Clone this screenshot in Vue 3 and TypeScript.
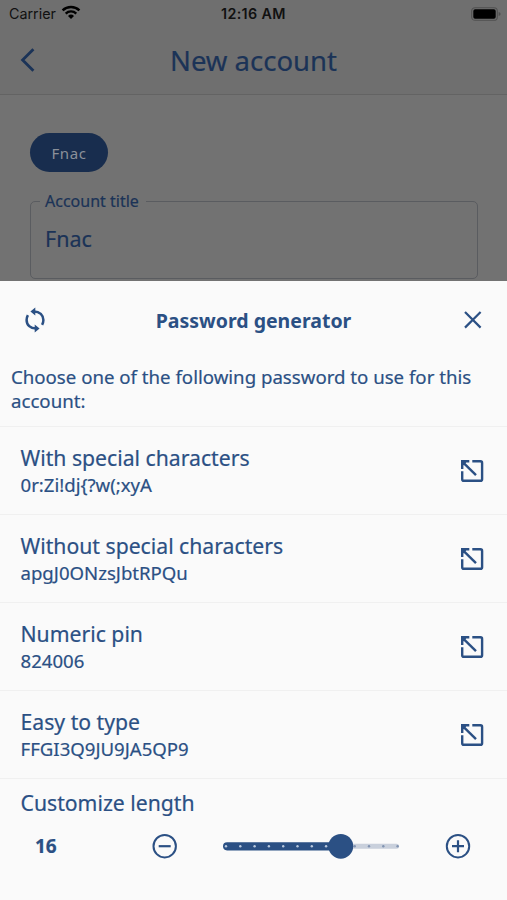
<script setup lang="ts">
import { computed, ref } from 'vue'

interface PasswordOption {
  label: string
  value: string
}

const options: PasswordOption[] = [
  { label: 'With special characters', value: '0r:Zi!dj{?w(;xyA' },
  { label: 'Without special characters', value: 'apgJ0ONzsJbtRPQu' },
  { label: 'Numeric pin', value: '824006' },
  { label: 'Easy to type', value: 'FFGI3Q9JU9JA5QP9' },
]

const minLength = 8
const maxLength = 20
const length = ref(16)
const ticks = Array.from({ length: maxLength - minLength + 1 }, (_, i) => 3 + i * 14.3)
const thumbX = computed(() => 3.4 + (length.value - minLength) * 14.3)

function step(delta: number) {
  length.value = Math.min(maxLength, Math.max(minLength, length.value + delta))
}
</script>

<template>
  <div class="screen">
    <div class="page">
      <header class="top">
        <div class="status">
          <span class="carrier">Carrier</span>
          <svg class="wifi" width="20" height="15" viewBox="0 0 20 15">
            <path d="M1.6 5.3A12.2 12.2 0 0 1 18.4 5.3" fill="none" stroke="#000" stroke-width="2.5" />
            <path d="M4.7 8.6A7.6 7.6 0 0 1 15.3 8.6" fill="none" stroke="#000" stroke-width="2.3" />
            <path d="M7 11A4.3 4.3 0 0 1 13 11L10 14Z" />
          </svg>
          <span class="time">12:16 AM</span>
          <svg class="battery" width="30" height="14" viewBox="0 0 30 14">
            <rect x=".7" y=".7" width="25.6" height="12.6" rx="3.4" fill="none" stroke="#505050" stroke-width="1.1" />
            <rect x="2.3" y="2.3" width="22.4" height="9.4" rx="1.8" />
            <path d="M27.6 5v4q2-.5 2-2t-2-2" fill="#505050" />
          </svg>
        </div>
        <div class="nav">
          <svg class="back" width="16" height="26" viewBox="0 0 16 26">
            <path d="M13.4 2.2 2.6 13 13.4 23.8" fill="none" stroke="#1b3357" stroke-width="2.8" />
          </svg>
          <h1>New account</h1>
        </div>
      </header>
      <div class="form">
        <span class="chip">Fnac</span>
        <fieldset class="field">
          <legend>Account title</legend>
          <div class="field-value">Fnac</div>
        </fieldset>
      </div>
    </div>

    <section class="sheet">
      <div class="sheet-head">
        <svg width="26" height="26" viewBox="0 0 26 26">
          <g fill="none" stroke="#2b5084" stroke-width="2.5">
            <path d="M12 4.4c5.6 0 9.4 3.7 9.4 8.7 0 1.9-.5 3.3-1.3 4.8" />
            <path d="M14 21.6c-5.6 0-9.4-3.7-9.4-8.7 0-1.9.5-3.3 1.3-4.8" />
          </g>
          <path d="M13.3.4v8L8.4 4.4ZM12.7 17.6v8l4.9-4Z" fill="#2b5084" />
        </svg>
        <h2>Password generator</h2>
        <svg width="20" height="20" viewBox="0 0 20 20">
          <path d="M2 2 17.6 17.6M17.6 2 2 17.6" stroke="#2b5084" stroke-width="2.2" />
        </svg>
      </div>
      <p class="intro">Choose one of the following password to use for this account:</p>

      <div v-for="option in options" :key="option.label" class="option">
        <div>
          <div class="label">{{ option.label }}</div>
          <div class="value">{{ option.value }}</div>
        </div>
        <svg width="24" height="24" viewBox="0 0 24 24">
          <g fill="none" stroke="#2b5084" stroke-width="2.4">
            <path d="M12.3 2.3H20.5Q22.1 2.3 22.1 3.9V20.2Q22.1 21.8 20.5 21.8H3.8Q2.2 21.8 2.2 20.2V12.2" />
            <path d="M3 3.4 16 16.2" />
          </g>
          <path d="M1 1.1H9.3V3.5H6.2L3.4 6.4V9.9H1Z" fill="#2b5084" />
        </svg>
      </div>

      <div class="customize">
        <div class="label">Customize length</div>
        <div class="controls">
          <span class="length">{{ length }}</span>
          <svg class="round" width="26" height="26" viewBox="0 0 26 26" @click="step(-1)">
            <circle cx="12.7" cy="13.2" r="11.2" fill="none" stroke="#2b5084" stroke-width="2" />
            <path d="M6.7 13.2H18.7" stroke="#2b5084" stroke-width="2.2" />
          </svg>
          <svg class="slider" width="178" height="28" viewBox="0 0 178 28">
            <rect x="100" y="11.8" width="76" height="5" rx="2.5" fill="#c9d0dc" />
            <rect x="0" y="10.2" width="120" height="8.2" rx="4.1" fill="#2b5084" />
            <circle
              v-for="x in ticks"
              :key="x"
              :cx="x"
              cy="14.3"
              r="1.2"
              :fill="x < thumbX ? '#b9c8dd' : '#8193b1'"
            />
            <circle :cx="thumbX" cy="14.3" r="12.4" fill="#2b5084" />
          </svg>
          <svg class="round" width="26" height="26" viewBox="0 0 26 26" @click="step(1)">
            <circle cx="13" cy="13.2" r="11.2" fill="none" stroke="#2b5084" stroke-width="2" />
            <path d="M7 13.2H19M13 7.2V19.2" stroke="#2b5084" stroke-width="2.2" />
          </svg>
        </div>
      </div>
    </section>
  </div>
</template>

<style>
body {
  margin: 0;
  background: #fafafa;
}
</style>

<style scoped>
.screen {
  display: flex;
  flex-direction: column;
  width: 507px;
  height: 900px;
  overflow: hidden;
  font-family: 'Noto Sans', sans-serif;
  color: #2b5084;
  white-space: nowrap;
  -webkit-text-stroke: 0.2px currentColor;
}
.page {
  flex: none;
  box-sizing: border-box;
  height: 281px;
  background: #727272;
  color: #1b3357;
}
.top {
  box-sizing: border-box;
  height: 95px;
  background: #6f6f6f;
  border-bottom: 1px solid #636363;
}
.status {
  display: grid;
  grid-template-columns: 52px 169px 1fr 30px;
  align-items: center;
  height: 27px;
  padding: 0 6px 0 9px;
  font-family: Inter, sans-serif;
  font-size: 14.3px;
  color: #111;
  -webkit-text-stroke: 0;
}
.wifi {
  margin-top: -2px;
}
.time {
  margin-left: -9px;
  font-weight: 600;
  letter-spacing: 0.35px;
}
.nav {
  display: grid;
  grid-template-columns: 60px 1fr 60px;
  align-items: center;
  height: 66px;
}
.back {
  margin-left: 20px;
}
h1,
h2,
p {
  margin: 0;
}
h1 {
  font-size: 27.5px;
  font-weight: 400;
  text-align: center;
}
.form {
  padding: 38px 29px 0 30px;
}
.chip {
  display: flex;
  align-items: center;
  justify-content: center;
  width: 78px;
  height: 39px;
  border-radius: 20px;
  background: #182d4e;
  color: #8a9099;
  font-size: 15px;
  letter-spacing: 0.6px;
  -webkit-text-stroke: 0;
}
.field {
  box-sizing: border-box;
  height: 88px;
  margin: 19px 0 0;
  padding: 0 0 0 9px;
  border: 1.5px solid #5a5c60;
  border-radius: 5px;
}
legend {
  height: 20px;
  padding: 0 7px 0 5px;
  font-size: 16px;
  line-height: 20px;
}
.field-value {
  padding-left: 5px;
  font-size: 21.5px;
  line-height: 56px;
}
.sheet {
  flex: 1;
  background: #fafafa;
}
.sheet-head {
  display: flex;
  align-items: center;
  justify-content: space-between;
  height: 78px;
  padding: 0 24px 0 22px;
}
h2 {
  margin: 0 0 0 -4px;
  font-size: 19.5px;
  font-weight: 700;
  -webkit-text-stroke: 0;
}
.intro {
  box-sizing: border-box;
  height: 67px;
  padding: 6px 20px 0 11px;
  font-size: 18.65px;
  line-height: 24px;
  white-space: normal;
}
.option {
  display: flex;
  align-items: center;
  justify-content: space-between;
  box-sizing: border-box;
  height: 88px;
  padding: 0 23px 0 20.5px;
  border-top: 1px solid #f0f0f0;
}
.option > div {
  margin-top: -1px;
}
.label {
  font-size: 21.2px;
  line-height: 28px;
}
.value {
  font-size: 18.6px;
  line-height: 25px;
}
.customize {
  padding: 10px 23px 0 20.5px;
  border-top: 1px solid #f0f0f0;
}
.controls {
  display: grid;
  grid-template-columns: 131px 71.5px 222px 26px;
  align-items: center;
  height: 58px;
}
.length {
  padding-left: 14.5px;
  font-size: 19px;
  font-weight: 700;
}
</style>
